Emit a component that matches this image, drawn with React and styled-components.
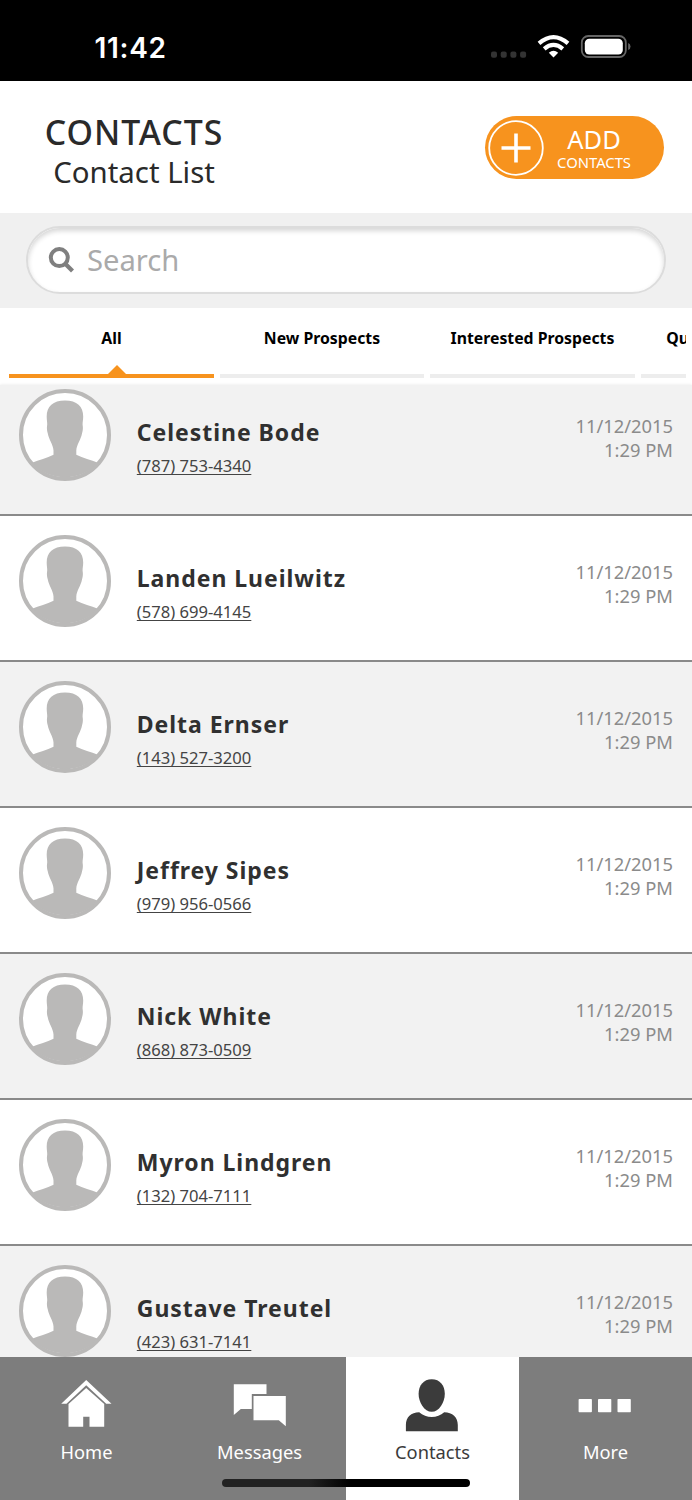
import React from 'react';
import styled, { createGlobalStyle } from 'styled-components';

const GlobalStyle = createGlobalStyle`
  * { box-sizing: border-box; }
  body { margin: 0; background: #fff; }
`;

const Screen = styled.div`
  position: relative;
  width: 692px;
  height: 1500px;
  display: flex;
  flex-direction: column;
  overflow: hidden;
  background: #fff;
  font-family: 'Noto Sans', 'Open Sans', sans-serif;
`;

const StatusBar = styled.div`
  flex: none;
  height: 81.4px;
  padding: 13.6px 61px 0 94.5px;
  display: flex;
  justify-content: space-between;
  align-items: flex-start;
  background: #000;
`;

const Clock = styled.div`
  font: 600 28px/69px Inter, sans-serif;
  letter-spacing: 0.7px;
  color: #fff;
`;

const StatusIcons = styled.svg`
  display: block;
  width: 142px;
  height: 26px;
  margin-top: 20.4px;
`;

const Header = styled.header`
  flex: none;
  height: 131.2px;
  padding: 30.4px 28px 0 45px;
  display: flex;
  justify-content: space-between;
  align-items: flex-start;
`;

const Titles = styled.div`
  width: 178px;
  display: flex;
  flex-direction: column;
  align-items: center;
  color: #2a2a2a;
  white-space: nowrap;
`;

const Title = styled.h1`
  margin: 0;
  font-size: 33.8px;
  font-weight: 500;
  line-height: 40px;
  letter-spacing: 1px;
`;

const Subtitle = styled.h2`
  margin: 0;
  font-size: 29.4px;
  font-weight: 400;
  line-height: 40px;
`;

const AddButton = styled.button`
  width: 179px;
  height: 63.5px;
  margin: 4.2px 0 0;
  padding: 0 33px 0 3px;
  display: flex;
  align-items: center;
  justify-content: space-between;
  border: 0;
  border-radius: 32px;
  background: #f7931e;
  color: #fff;
  font-family: inherit;
`;

const PlusIcon = styled.svg`
  flex: none;
  width: 56px;
  height: 56px;
`;

const AddText = styled.span`
  display: flex;
  flex-direction: column;
  align-items: center;
  padding-top: 3px;
`;

const AddMain = styled.span`
  font-size: 25.5px;
  line-height: 26px;
`;

const AddSub = styled.span`
  font-size: 14.8px;
  line-height: 20px;
`;

const SearchBand = styled.div`
  flex: none;
  height: 95px;
  padding: 13px 26px 0;
  background: #f0f0f0;
`;

const SearchBox = styled.div`
  height: 68.5px;
  padding-left: 20px;
  display: flex;
  align-items: center;
  border: 2px solid #dcdcdc;
  border-radius: 35px;
  background: #fff;
  box-shadow: inset 0 3px 5px rgba(0, 0, 0, 0.16);
`;

const SearchIcon = styled.svg`
  width: 28px;
  height: 28px;
  margin-right: 11px;
`;

const Placeholder = styled.span`
  font-size: 29.2px;
  line-height: 40px;
  color: #aaa;
`;

const Tabs = styled.nav`
  flex: none;
  height: 77.4px;
  margin: 0 5.6px 0 9.4px;
  padding-top: 20px;
  display: flex;
  align-items: flex-start;
  gap: 6.3px;
  overflow: hidden;
`;

const Tab = styled.div`
  position: relative;
  flex: none;
  width: 204.2px;
  height: 50.6px;
  padding-left: ${(p) => (p.$start ? '25.5px' : '0')};
  text-align: ${(p) => (p.$start ? 'left' : 'center')};
  font-size: 15.8px;
  font-weight: 700;
  line-height: 20px;
  white-space: nowrap;
  color: #000;
  border-bottom: 4px solid ${(p) => (p.$active ? '#f7931e' : '#ededed')};
`;

const TabPointer = styled.span`
  position: absolute;
  left: 98.5px;
  bottom: 0;
  border: 9px solid transparent;
  border-top-width: 0;
  border-bottom-color: #f7931e;
`;

const ListViewport = styled.main`
  flex: 1;
  min-height: 0;
  overflow: hidden;
  box-shadow: 0 0 3px rgba(0, 0, 0, 0.1);
`;

const List = styled.div`
  margin-top: -15px;
`;

const Row = styled.div`
  height: 146px;
  padding: 18.6px 19px 0 19px;
  display: flex;
  align-items: flex-start;
  background: ${(p) => (p.$shaded ? '#f2f2f2' : '#fff')};
  border-bottom: 2px solid #8a8a8a;
`;

const Avatar = styled.svg`
  flex: none;
  width: 92px;
  height: 92px;
`;

const Person = styled.div`
  flex: 1;
  margin-left: 25.8px;
  padding-top: 27.6px;
`;

const Name = styled.div`
  font-size: 23px;
  font-weight: 700;
  line-height: 32px;
  letter-spacing: 0.96px;
  color: #303030;
`;

const Phone = styled.a`
  display: block;
  margin-top: 6.2px;
  font-size: 16.6px;
  line-height: 24px;
  color: #444;
  text-decoration: underline;
  text-decoration-thickness: 1.3px;
  text-underline-offset: 2px;
`;

const Stamp = styled.div`
  padding-top: 25.4px;
  font-size: 18.35px;
  line-height: 24px;
  text-align: right;
  color: #8b8b8b;
`;

const NavBar = styled.nav`
  flex: none;
  height: 142.7px;
  display: flex;
`;

const NavItem = styled.div`
  flex: 1;
  padding-top: 21.6px;
  display: flex;
  flex-direction: column;
  align-items: center;
  background: ${(p) => (p.$active ? '#fff' : '#7d7d7d')};
  color: ${(p) => (p.$active ? '#3b3b3b' : '#fff')};
`;

const NavIcon = styled.svg`
  width: 54px;
  height: 54px;
  margin-right: 1.4px;
  fill: currentColor;
`;

const NavLabel = styled.span`
  margin-top: 7px;
  font-size: 18.3px;
  line-height: 24px;
`;

const HomeIndicator = styled.div`
  position: absolute;
  left: 222px;
  bottom: 13px;
  width: 248px;
  height: 8px;
  border-radius: 4px;
  background: linear-gradient(90deg, #222 0, #222 35%, #000 52%);
`;

const contacts = [
  ['Celestine Bode', '(787) 753-4340'],
  ['Landen Lueilwitz', '(578) 699-4145'],
  ['Delta Ernser', '(143) 527-3200'],
  ['Jeffrey Sipes', '(979) 956-0566'],
  ['Nick White', '(868) 873-0509'],
  ['Myron Lindgren', '(132) 704-7111'],
  ['Gustave Treutel', '(423) 631-7141'],
];

function ContactRow({ name, phone, shaded }) {
  return (
    <Row $shaded={shaded}>
      <Avatar viewBox="0 0 92 92">
        <circle cx="46" cy="46" r="44" fill="#fff" />
        <path
          fill="#bab9b8"
          d="M46 11.500C34 11.500 27.700 17.500 27.700 27.500c0 4 .8 6.500.4 9-.4 3-.1 5 .7 8 1 6 5.300 11 5.700 17V65.700C28 69 20 71 13 73.800A44.500 44.500 0 0 0 79 73.800C72 71 64 69 57.300 65.700V61.500c.4-6 4.700-11 5.700-17 .8-3 1.100-5 .7-8-.4-2.500.5-5 .5-9C64.200 17.500 58 11.500 46 11.500z"
        />
        <circle cx="46" cy="46" r="44" fill="none" stroke="#bab9b8" strokeWidth="4" />
      </Avatar>
      <Person>
        <Name>{name}</Name>
        <Phone>{phone}</Phone>
      </Person>
      <Stamp>
        11/12/2015
        <br />
        1:29 PM
      </Stamp>
    </Row>
  );
}

export default function App() {
  return (
    <Screen>
      <GlobalStyle />
      <StatusBar>
        <Clock>11:42</Clock>
        <StatusIcons viewBox="0 0 142 26">
          <g fill="#333">
            <rect x="2" y="17.500" width="6" height="6.300" rx="2" />
            <rect x="11.700" y="17.500" width="6" height="6.300" rx="2" />
            <rect x="21.400" y="17.500" width="6" height="6.300" rx="2" />
            <rect x="31.100" y="17.500" width="6" height="6.300" rx="2" />
          </g>
          <g fill="none" stroke="#fff" strokeWidth="4.200">
            <path d="M50 9.300Q64.500-3 79 9.300" />
            <path d="M55.200 14.800Q64.500 7 73.800 14.800" />
          </g>
          <path fill="#fff" d="M59.800 18.800Q64.500 14.600 69.200 18.800L64.500 23.500z" />
          <rect x="92.800" y="2" width="44" height="21" rx="6.500" fill="none" stroke="#666" strokeWidth="1.800" />
          <rect x="95.800" y="4.800" width="38" height="15.800" rx="4.500" fill="#fff" />
          <path fill="#666" d="M139.200 9v7q2.300-.8 2.300-3.500T139.200 9z" />
        </StatusIcons>
      </StatusBar>

      <Header>
        <Titles>
          <Title>CONTACTS</Title>
          <Subtitle>Contact List</Subtitle>
        </Titles>
        <AddButton>
          <PlusIcon viewBox="0 0 56 56">
            <circle cx="28" cy="28" r="26.800" fill="none" stroke="#fff" strokeWidth="1.800" />
            <path d="M13.500 28h29M28 13.500v29" stroke="#fff" strokeWidth="3.600" />
          </PlusIcon>
          <AddText>
            <AddMain>ADD</AddMain>
            <AddSub>CONTACTS</AddSub>
          </AddText>
        </AddButton>
      </Header>

      <SearchBand>
        <SearchBox>
          <SearchIcon viewBox="0 0 28 28" fill="none" stroke="#7f7f7f">
            <circle cx="11.300" cy="11.600" r="8.500" strokeWidth="4" />
            <path d="M17.500 18L24.500 25" strokeWidth="4.200" />
          </SearchIcon>
          <Placeholder>Search</Placeholder>
        </SearchBox>
      </SearchBand>

      <Tabs>
        <Tab $active>
          All
          <TabPointer />
        </Tab>
        <Tab>New Prospects</Tab>
        <Tab>Interested Prospects</Tab>
        <Tab $start>Qu</Tab>
      </Tabs>

      <ListViewport>
        <List>
          {contacts.map(([name, phone], i) => (
            <ContactRow key={name} name={name} phone={phone} shaded={i % 2 === 0} />
          ))}
        </List>
      </ListViewport>

      <NavBar>
        <NavItem>
          <NavIcon viewBox="0 0 54 54">
            <path d="M27.200 1L2.200 24.700H7.500L27.200 6.300 47.200 24.700H52.500z" />
            <path d="M27.200 9L9.500 25V47.700H24.200V37.700H30.500V47.700H45.200V25z" />
          </NavIcon>
          <NavLabel>Home</NavLabel>
        </NavItem>
        <NavItem>
          <NavIcon viewBox="0 0 54 54">
            <path d="M1.800 5.300H34.500V15H19.800V30H8.800L1.800 36z" />
            <path d="M21.500 17H53.800V47.300L46.800 41.300H21.500z" />
          </NavIcon>
          <NavLabel>Messages</NavLabel>
        </NavItem>
        <NavItem $active>
          <NavIcon viewBox="0 0 54 54">
            <path d="M26.700.3C35 .3 39.800 6.500 39.800 15S34 32.800 26.700 32.800 13.600 23.500 13.600 15 18.500.3 26.700.3z" />
            <path d="M.9 52.300V46C.9 38 6 33.200 14.200 33.200 21 39.600 32.500 39.600 39.200 33.200 47.500 33.200 52.800 38 52.800 46V52.300z" />
          </NavIcon>
          <NavLabel>Contacts</NavLabel>
        </NavItem>
        <NavItem>
          <NavIcon viewBox="0 0 54 54">
            <rect x=".6" y="20" width="13.300" height="13.200" rx=".8" />
            <rect x="20" y="20" width="13.300" height="13.200" rx=".8" />
            <rect x="39.500" y="20" width="13.300" height="13.200" rx=".8" />
          </NavIcon>
          <NavLabel>More</NavLabel>
        </NavItem>
      </NavBar>
      <HomeIndicator />
    </Screen>
  );
}
